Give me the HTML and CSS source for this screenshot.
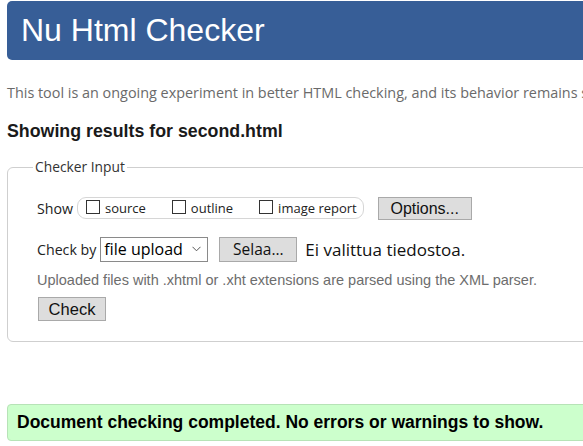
FILE: index.html
```html
<!DOCTYPE html>
<html>
<head>
<meta charset="utf-8">
<title>Nu Html Checker</title>
<link rel="stylesheet" href="styles.css">
</head>
<body>
<h1 class="banner">Nu Html Checker</h1>
<p class="intro">This tool is an ongoing experiment in better HTML checking, and its behavior remains subject to change</p>
<h2 class="results">Showing results for second.html</h2>
<fieldset class="input">
  <legend class="legend">Checker Input</legend>
  <div class="row show-row">
    <span class="label">Show</span>
    <span class="pill">
      <label class="opt"><span class="box"></span>source</label>
      <label class="opt"><span class="box"></span>outline</label>
      <label class="opt"><span class="box"></span>image report</label>
    </span>
    <span class="btn options">Options...</span>
  </div>
  <div class="row check-row">
    <span class="label">Check by</span>
    <span class="select">file upload<svg class="chev" width="9" height="6" viewBox="0 0 9 6"><path d="M0.5 0.8 L4.5 4.8 L8.5 0.8" fill="none" stroke="#555" stroke-width="1"/></svg></span>
    <span class="btn browse">Selaa...</span>
    <span class="nofile">Ei valittua tiedostoa.</span>
  </div>
  <p class="hint">Uploaded files with .xhtml or .xht extensions are parsed using the XML parser.</p>
  <span class="btn check">Check</span>
</fieldset>
<p class="success">Document checking completed. No errors or warnings to show.</p>
</body>
</html>
```
FILE: styles.css
```css
html, body { margin: 0; padding: 0; }
body {
  width: 620px;
  padding: 1px 0 0 7px;
  font-family: "Liberation Sans", Arial, sans-serif;
  background: #fff;
  color: #000;
  overflow: hidden;
  height: 445px;
}
.banner {
  margin: 0;
  height: 59px;
  box-sizing: border-box;
  background: #375e97;
  color: #fff;
  font-weight: normal;
  font-size: 32px;
  line-height: 59px;
  padding-left: 14px;
  border-radius: 5px 0 0 5px;
}
.intro {
  margin: 24px 0 0 0;
  font-family: "Open Sans", "Noto Sans", sans-serif;
  font-size: 14.4px;
  color: #6a6a6a;
  white-space: nowrap;
  line-height: 18px;
}
.results {
  margin: 18px 0 0 0;
  font-size: 17.8px;
  line-height: 22px;
  font-weight: bold;
  color: #1a1a1a;
}
.input {
  margin: 16px 0 0 0;
  border: 1px solid #cfcfcf;
  border-radius: 6px;
  padding: 0 0 0 29px;
  height: 184px;
  box-sizing: border-box;
}
.legend {
  margin-left: -4px;
  padding: 0 2px;
  font-family: "Open Sans", "Noto Sans", sans-serif;
  font-size: 13.8px;
  line-height: 18px;
  color: #333;
}
.row { display: flex; align-items: center; }
.label {
  font-family: "Open Sans", "Noto Sans", sans-serif;
  font-size: 14.2px;
  color: #222;
}
.show-row { height: 24px; margin-top: 20px; }
.pill {
  margin-left: 4px;
  display: flex;
  align-items: center;
  border: 1px solid #d6d6d6;
  border-radius: 9px;
  height: 22px;
  box-sizing: border-box;
  padding: 0 6px 0 8px;
}
.opt {
  display: flex;
  align-items: center;
  font-family: "Open Sans", "Noto Sans", sans-serif;
  font-size: 13px;
  color: #222;
  margin-right: 26px;
}
.opt:last-child { margin-right: 0; }
.box {
  width: 14px; height: 14px;
  border: 1px solid #333;
  box-sizing: border-box;
  margin-right: 5px;
  margin-top: -3px;
}
.btn {
  display: inline-block;
  background: #dddddd;
  border: 1px solid #a9a9a9;
  box-sizing: border-box;
  font-family: "Liberation Sans", Arial, sans-serif;
  font-size: 16px;
  color: #111;
  text-align: center;
  height: 23px;
  line-height: 21px;
}
.options { width: 94px; margin-left: 14px; }
.check-row { margin-top: 17px; height: 25px; }
.select {
  margin-left: 4px;
  width: 108px;
  height: 25px;
  box-sizing: border-box;
  border: 1px solid #8a8a8a;
  font-family: "Open Sans", "Noto Sans", sans-serif;
  font-size: 16px;
  line-height: 23px;
  padding-left: 3px;
  color: #000;
  display: flex;
  align-items: center;
  justify-content: space-between;
  padding-right: 6px;
}
.chev { margin-top: -2px; }
.browse {
  width: 78px; margin-left: 11px; height: 25px; line-height: 23px;
  font-family: "Open Sans", "Noto Sans", sans-serif; font-size: 15.5px;
}
.nofile {
  margin-left: 8px;
  font-family: "Open Sans", "Noto Sans", sans-serif;
  font-size: 17px;
  color: #111;
}
.hint {
  margin: 9px 0 0 0;
  font-size: 14.5px;
  color: #6d6d6d;
  line-height: 18px;
}
.check { width: 68px; margin-left: 1px; margin-top: 8px; font-size: 16.5px; height: 24px; line-height: 22px; }
.success {
  margin: 62px 0 0 0;
  height: 37px;
  box-sizing: border-box;
  background: #ccffcc;
  border: 1px solid #b7e3b7;
  border-radius: 4px;
  font-weight: bold;
  font-size: 17.5px;
  line-height: 35px;
  padding-left: 9px;
  color: #000;
}
```
